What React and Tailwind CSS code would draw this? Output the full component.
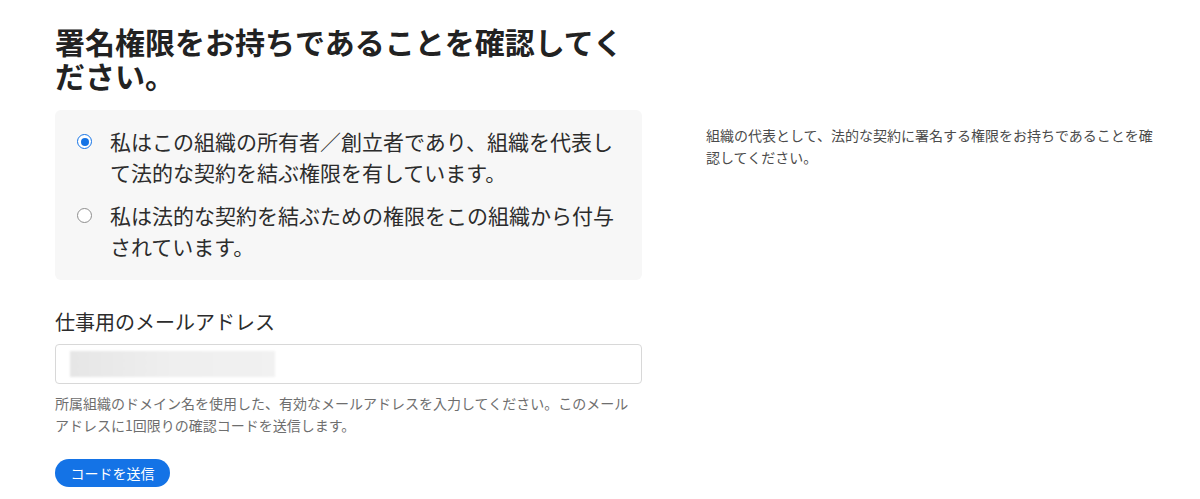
const Radio = ({ checked }) => (
  <span
    className={`mt-[8px] flex h-[15px] w-[15px] shrink-0 items-center justify-center rounded-full border-[1.5px] bg-white ${
      checked ? 'border-[#1473e6]' : 'border-[#8e8e8e]'
    }`}
  >
    {checked && <span className="h-[8px] w-[8px] rounded-full bg-[#1473e6]" />}
  </span>
);

const options = [
  { id: 'owner', label: '私はこの組織の所有者／創立者であり、組織を代表して法的な契約を結ぶ権限を有しています。', checked: true },
  { id: 'granted', label: '私は法的な契約を結ぶための権限をこの組織から付与されています。', checked: false },
];

export default function App() {
  return (
    <div
      className="flex min-h-[499px] bg-white pl-[55px] pt-[24px] text-[#2c2c2c]"
      style={{ fontFamily: '"Noto Sans CJK JP", "Noto Sans", sans-serif' }}
    >
      <div className="w-[587px] shrink-0">
        <h1 className="text-[30px] font-bold leading-[34px] text-[#222]">
          署名権限をお持ちであることを確認してください。
        </h1>

        <div className="mt-[18px] rounded-[6px] bg-[#f7f7f7] pb-[18px] pl-[22px] pr-[20px] pt-[16px]">
          {options.map((opt, i) => (
            <label key={opt.id} className={`flex gap-[18px] ${i > 0 ? 'mt-[12px]' : ''}`}>
              <Radio checked={opt.checked} />
              <span className="text-[21px] leading-[31px] text-[#2c2c2c]">{opt.label}</span>
            </label>
          ))}
        </div>

        <div className="mt-[28px] text-[20px] leading-[28px] text-[#2c2c2c]">仕事用のメールアドレス</div>
        <div className="mt-[8px] flex h-[40px] items-center rounded-[4px] border border-[#d8d8d8] px-[14px]">
          <div className="h-[26px] w-[205px] bg-gradient-to-r from-[#e6e6e6] via-[#efefef] to-[#f1f1f1] blur-[1px]" />
        </div>
        <p className="mt-[8px] text-[14px] leading-[22px] text-[#6e6e6e]">
          所属組織のドメイン名を使用した、有効なメールアドレスを入力してください。このメールアドレスに1回限りの確認コードを送信します。
        </p>

        <button className="mt-[23px] flex h-[28px] w-[115px] items-center justify-center rounded-full bg-[#1473e6] text-[14px] text-white">
          コードを送信
        </button>
      </div>

      <div className="ml-[64px] w-[455px] pt-[100px]">
        <p className="text-[14px] leading-[22px] text-[#4b4b4b]">
          組織の代表として、法的な契約に署名する権限をお持ちであることを確認してください。
        </p>
      </div>
    </div>
  );
}
